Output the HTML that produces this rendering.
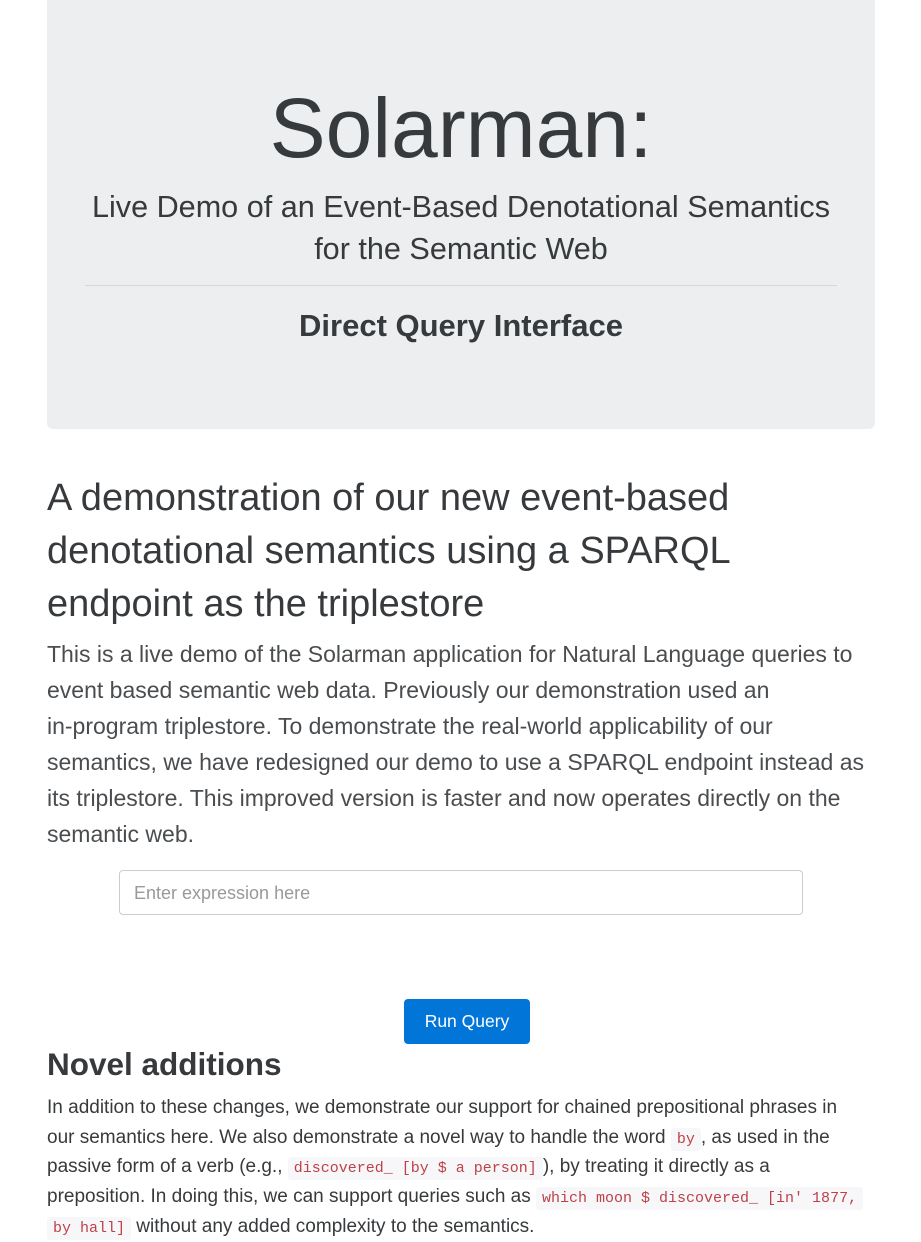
<!DOCTYPE html>
<html><head><meta charset="utf-8"><style>
*{box-sizing:border-box;margin:0;padding:0}
body{width:921px;height:1228px;overflow:hidden;background:#fff;font-family:"Liberation Sans",sans-serif;color:#373a3c;position:relative}
.j{position:absolute;left:47px;top:0;width:828px;height:429px;background:#eceeef;border-radius:0 0 6px 6px}
.t{position:absolute;left:0;width:100%;text-align:center;white-space:nowrap}
.a{position:absolute;left:47px;white-space:nowrap}
code{font-family:"Liberation Mono",monospace;font-size:15px;line-height:1;color:#bd4147;background:#f7f7f9;padding:3px 6px;border-radius:3px}
</style></head><body>
<div class="j">
<div class="t" style="top:76px;font-size:84px;line-height:104px">Solarman:</div>
<div class="t" style="top:186px;font-size:30.6px;line-height:42px">Live Demo of an Event-Based Denotational Semantics<br>for the Semantic Web</div>
<div style="position:absolute;left:38px;top:285px;width:752px;border-top:1px solid #d5d7d9"></div>
<div class="t" style="top:306px;font-size:31px;font-weight:bold;line-height:40px">Direct Query Interface</div>
</div>
<div class="a" style="top:472px;font-size:38px;line-height:53px">A demonstration of our new event-based<br>denotational semantics using a SPARQL<br>endpoint as the triplestore</div>
<div class="a" style="top:636px;font-size:23px;line-height:36px;color:#4a4d50">This is a live demo of the Solarman application for Natural Language queries to<br>event based semantic web data. Previously our demonstration used an<br>in-program triplestore. To demonstrate the real-world applicability of our<br>semantics, we have redesigned our demo to use a SPARQL endpoint instead as<br>its triplestore. This improved version is faster and now operates directly on the<br>semantic web.</div>
<div style="position:absolute;left:119px;top:870px;width:684px;height:45px;border:1px solid #ccc;border-radius:4px;padding:0 14px;font-size:18px;line-height:45px;color:#999">Enter expression here</div>
<div style="position:absolute;left:404px;top:999px;width:126px;height:45px;background:#0275d8;border-radius:4px;color:#fff;font-size:17.5px;text-align:center;line-height:45px">Run Query</div>
<div class="a" style="top:1043px;font-size:31.5px;font-weight:bold;line-height:42px">Novel additions</div>
<div class="a" style="top:1093px;font-size:19px;line-height:29.7px">In addition to these changes, we demonstrate our support for chained prepositional phrases in<br>our semantics here. We also demonstrate a novel way to handle the word <code>by</code>, as used in the<br>passive form of a verb (e.g., <code>discovered_ [by $ a person]</code>), by treating it directly as a<br>preposition. In doing this, we can support queries such as <code>which moon $ discovered_ [in' 1877,</code><br><code>by hall]</code> without any added complexity to the semantics.</div>
</body></html>
